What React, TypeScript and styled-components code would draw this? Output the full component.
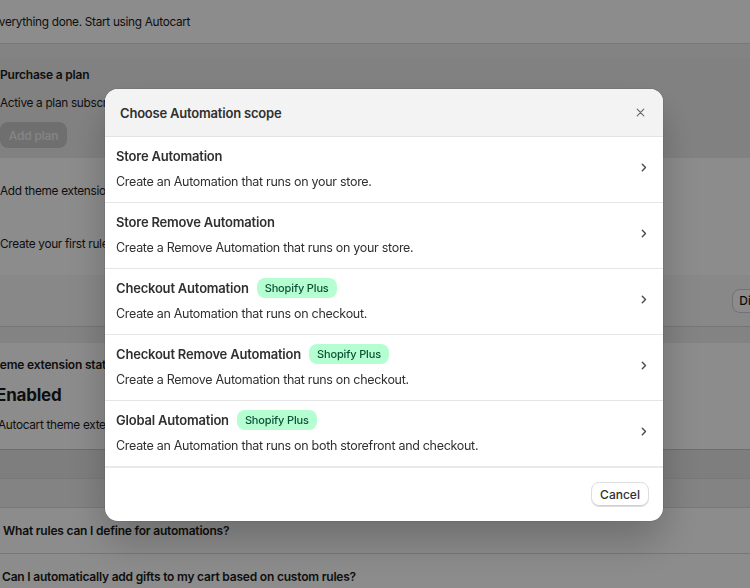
import styled, { createGlobalStyle } from "styled-components";

const GlobalStyle = createGlobalStyle`
  html, body {
    margin: 0;
    padding: 0;
  }
  body {
    font-family: Inter, "Noto Sans", "Liberation Sans", sans-serif;
    color: #303030;
    background: #f1f1f1;
    overflow: hidden;
  }
  * { box-sizing: border-box; }
`;

interface IndentProps {
  $indent?: number;
}

interface ShadeProps {
  $bg?: string;
}

const Page = styled.div`
  width: 750px;
  height: 588px;
  overflow: hidden;
  background: #eeeeee;
`;

const Band = styled.div<ShadeProps & { $height: number }>`
  height: ${({ $height }) => $height}px;
  background: ${({ $bg }) => $bg || "#ffffff"};
  border-bottom: 1px solid #dcdcdc;
  display: flex;
  align-items: center;
  justify-content: space-between;
`;

const Plain = styled.div<IndentProps>`
  font-size: 11.8px;
  letter-spacing: -0.3px;
  color: #1a1a1a;
  margin-left: ${({ $indent = 0 }) => $indent}px;
  white-space: nowrap;
`;

const Strong = styled(Plain)`
  font-size: 12px;
  font-weight: 600;
  letter-spacing: -0.2px;
`;

const Gap = styled.div<{ $height: number }>`
  height: ${({ $height }) => $height}px;
`;

const StepList = styled.div`
  background: #ffffff;
`;

const ActiveStep = styled.div`
  height: 100px;
  background: #ececec;
  display: flex;
  flex-direction: column;
  padding-top: 9px;
  gap: 14px;
`;

const IdleStep = styled.div`
  height: 53px;
  display: flex;
  align-items: center;
`;

const DisabledButton = styled.div`
  width: 67px;
  height: 26px;
  border-radius: 8px;
  background: #cbcbcb;
  color: #f2f2f2;
  font-size: 12px;
  letter-spacing: -0.2px;
  font-weight: 550;
  display: flex;
  align-items: center;
  justify-content: center;
  margin-top: -2px;
`;

const CardFooter = styled.div`
  height: 52px;
  background: #f7f7f7;
  border-bottom: 1px solid #d6d6d6;
  display: flex;
  justify-content: flex-end;
  align-items: center;
`;

const GhostButton = styled.div`
  height: 24px;
  padding: 0 6px;
  margin-right: -41px;
  border-radius: 8px;
  background: #ffffff;
  border: 1px solid #d0d0d0;
  font-size: 12px;
  font-weight: 550;
  color: #1a1a1a;
  display: flex;
  align-items: center;
`;

const StatusCard = styled.div`
  height: 107px;
  background: #ffffff;
  border-bottom: 1px solid #c8c8c8;
  display: flex;
  flex-direction: column;
  padding-top: 14px;
  gap: 10px;
`;

const BigValue = styled(Plain)`
  font-size: 17px;
  font-weight: 700;
  letter-spacing: -0.2px;
  line-height: 26px;
`;

const FaqRow = styled.div`
  height: 46px;
  background: #ffffff;
  border-bottom: 1px solid #d9d9d9;
  display: flex;
  align-items: center;
`;

/* modal */

const Backdrop = styled.div`
  position: fixed;
  inset: 0;
  background: rgba(0, 0, 0, 0.45);
  padding: 89px 0 0 105px;
`;

const Dialog = styled.div`
  width: 558px;
  border-radius: 13px;
  overflow: hidden;
  background: #ffffff;
  box-shadow: 0 20px 40px rgba(0, 0, 0, 0.22), 0 0 0 1px rgba(0, 0, 0, 0.06);
`;

const Header = styled.div`
  height: 48px;
  background: #f3f3f3;
  border-bottom: 1px solid #e3e3e3;
  display: flex;
  align-items: center;
  justify-content: space-between;
  padding: 0 18px 0 15px;
`;

const Heading = styled.div`
  font-size: 13px;
  font-weight: 600;
  letter-spacing: -0.2px;
  color: #303030;
`;

const CloseButton = styled.button`
  border: none;
  background: none;
  padding: 0;
  width: 10px;
  height: 10px;
  display: flex;
  align-items: center;
  justify-content: center;
  color: #6b6b6b;
  cursor: pointer;
`;

const Option = styled.div`
  height: 66px;
  border-bottom: 1px solid #e6e6e6;
  display: flex;
  align-items: center;
  justify-content: space-between;
  padding: 0 16px 0 11px;
  cursor: pointer;
`;

const OptionText = styled.div`
  display: flex;
  flex-direction: column;
  gap: 6px;
  margin-top: -1px;
`;

const TitleLine = styled.div`
  display: flex;
  align-items: center;
  gap: 8px;
  height: 20px;
  font-size: 13px;
  font-weight: 600;
  letter-spacing: -0.2px;
  color: #303030;
`;

const Badge = styled.span`
  height: 20px;
  padding: 0 8px;
  border-radius: 8px;
  background: #b4fed2;
  color: #0c5132;
  font-size: 11px;
  letter-spacing: -0.15px;
  font-weight: 450;
  display: inline-flex;
  align-items: center;
`;

const Description = styled.div`
  font-size: 12.5px;
  letter-spacing: -0.3px;
  line-height: 20px;
  color: #303030;
`;

const Chevron = styled.svg`
  margin-bottom: 5px;
  color: #4a4a4a;
`;

const Footer = styled.div`
  height: 55px;
  border-top: 2px solid #e9e9e9;
  display: flex;
  align-items: center;
  justify-content: flex-end;
  padding: 0 14px;
  margin-top: -1px;
`;

const CancelButton = styled.button`
  height: 25px;
  width: 58px;
  border-radius: 8px;
  background: #ffffff;
  border: 1px solid #dddddd;
  box-shadow: inset 0 -1px 0 #cfcfcf;
  font-family: inherit;
  font-size: 12px;
  font-weight: 550;
  color: #303030;
  cursor: pointer;
`;

const scopes = [
  { title: "Store Automation", desc: "Create an Automation that runs on your store.", plus: false },
  { title: "Store Remove Automation", desc: "Create a Remove Automation that runs on your store.", plus: false },
  { title: "Checkout Automation", desc: "Create an Automation that runs on checkout.", plus: true },
  { title: "Checkout Remove Automation", desc: "Create a Remove Automation that runs on checkout.", plus: true },
  { title: "Global Automation", desc: "Create an Automation that runs on both storefront and checkout.", plus: true },
];

const App = () => {
  return (
    <>
      <GlobalStyle />
      <Page>
        <Band $height={44}>
          <Plain $indent={-8}>Everything done. Start using Autocart</Plain>
        </Band>
        <Gap $height={14} />
        <StepList>
          <ActiveStep>
            <Strong>Purchase a plan</Strong>
            <Plain>Active a plan subscription to start using Autocart</Plain>
            <DisabledButton>Add plan</DisabledButton>
          </ActiveStep>
          <Gap $height={6} />
          <IdleStep>
            <Plain>Add theme extension</Plain>
          </IdleStep>
          <IdleStep>
            <Plain>Create your first rule</Plain>
          </IdleStep>
          <Gap $height={5} />
          <CardFooter>
            <GhostButton>Dismiss</GhostButton>
          </CardFooter>
        </StepList>
        <Gap $height={16} />
        <StatusCard>
          <Strong $indent={-15}>Theme extension status</Strong>
          <BigValue $indent={-4}>Enabled</BigValue>
          <Plain $indent={-2}>Autocart theme extension is active on your store</Plain>
        </StatusCard>
        <Band $height={29} $bg="#e6e6e6" />
        <Band $height={29} $bg="#eeeeee" />
        <FaqRow>
          <Strong $indent={3}>What rules can I define for automations?</Strong>
        </FaqRow>
        <FaqRow>
          <Strong $indent={2}>Can I automatically add gifts to my cart based on custom rules?</Strong>
        </FaqRow>
      </Page>

      <Backdrop>
        <Dialog role="dialog" aria-label="Choose Automation scope">
          <Header>
            <Heading>Choose Automation scope</Heading>
            <CloseButton aria-label="Close">
              <svg width="9" height="9" viewBox="0 0 9 9">
                <path d="M1.2 1.2l6.6 6.6M7.8 1.2L1.2 7.8" stroke="currentColor" strokeWidth="1.2" strokeLinecap="round" />
              </svg>
            </CloseButton>
          </Header>
          {scopes.map(s => (
            <Option key={s.title}>
              <OptionText>
                <TitleLine>
                  {s.title}
                  {s.plus && <Badge>Shopify Plus</Badge>}
                </TitleLine>
                <Description>{s.desc}</Description>
              </OptionText>
              <Chevron width="6" height="9" viewBox="0 0 6 9">
                <path d="M1.3 1.2l3.2 3.3-3.2 3.3" fill="none" stroke="currentColor" strokeWidth="1.4" strokeLinecap="round" strokeLinejoin="round" />
              </Chevron>
            </Option>
          ))}
          <Footer>
            <CancelButton>Cancel</CancelButton>
          </Footer>
        </Dialog>
      </Backdrop>
    </>
  );
};

export default App;
